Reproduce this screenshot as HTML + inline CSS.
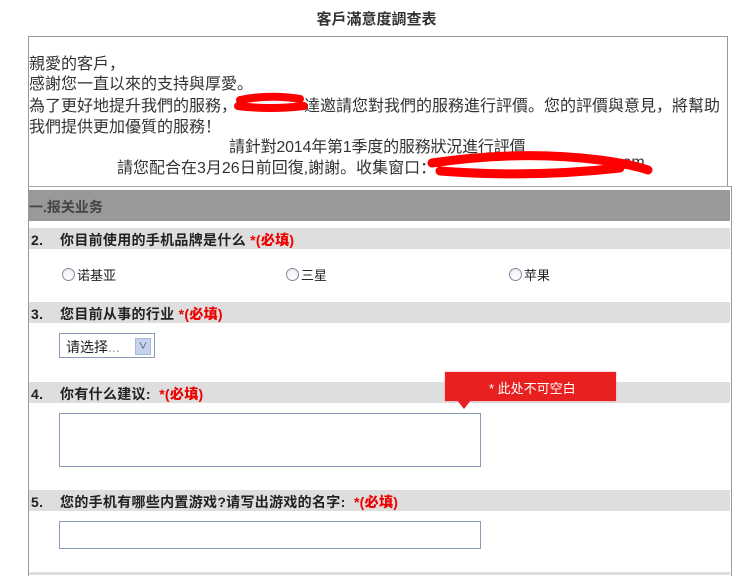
<!DOCTYPE html>
<html><head><meta charset="utf-8"><style>
body{margin:0;width:753px;height:575px;overflow:hidden;background:#fff;font-family:"Liberation Sans","Noto Sans CJK SC",sans-serif;position:relative;color:#222}
.a{position:absolute;white-space:nowrap}
.bar{position:absolute;left:29px;width:701px;background:#dedede;height:21px}
.q{position:absolute;font-size:14px;font-weight:bold;color:#222;letter-spacing:0.3px}
.q b{color:#e00}
.r{position:absolute;width:11px;height:11px;border:1px solid #7a8ba0;border-radius:50%;background:linear-gradient(#eee,#fff)}
.t{font-size:13px}
.p{font-size:16px;color:#333;position:absolute;white-space:nowrap}
</style></head><body>
<div class="a" style="left:0;width:753px;text-align:center;top:8px;font-size:15px;font-weight:bold;color:#333">客戶滿意度調查表</div>
<div class="a" style="left:28px;top:36px;width:698px;height:150px;border:1px solid #999;border-bottom:none"></div>
<div class="p" style="left:29px;top:50px">親愛的客戶，</div>
<div class="p" style="left:29px;top:70px">感謝您一直以來的支持與厚愛。</div>
<div class="p" style="left:29px;top:92px">為了更好地提升我們的服務，</div>
<div class="p" style="left:304px;top:92px">達邀請您對我們的服務進行評價。您的評價與意見，將幫助</div>
<div class="p" style="left:29px;top:113px">我們提供更加優質的服務！</div>
<div class="p" style="left:229px;top:133px;letter-spacing:-0.2px">請針對2014年第1季度的服務狀況進行評價</div>
<div class="p" style="left:117px;top:154px">請您配合在3月26日前回復,謝謝。收集窗口：</div>
<div class="p" style="left:610px;top:154px">.com</div>
<svg class="a" style="left:0;top:0" width="753" height="200"><g stroke="#f00" stroke-linecap="round" fill="none"><path d="M240 100 Q270 94 300 99 M238 106 Q270 110 304 106" stroke-width="8"/><path d="M432 163 Q520 150 600 160 Q630 164 648 170 M440 171 Q530 178 620 168" stroke-width="9"/></g></svg>
<div class="a" style="left:28px;top:186px;width:702px;height:389px;border-left:1px solid #999;border-right:1px solid #999;border-top:1px solid #aaa"></div>
<div class="a" style="left:29px;top:190px;width:701px;height:31px;background:#999"></div>
<div class="a" style="left:29px;top:197px;font-size:14px;font-weight:bold;color:#444">一.报关业务</div>
<div class="bar" style="top:228px"></div>
<div class="q" style="left:31px;top:230px">2.&nbsp;&nbsp;&nbsp;&nbsp;你目前使用的手机品牌是什么 <b>*(必填)</b></div>
<div class="r" style="left:62px;top:268px"></div><div class="a t" style="left:77px;top:265px">诺基亚</div>
<div class="r" style="left:286px;top:268px"></div><div class="a t" style="left:301px;top:265px">三星</div>
<div class="r" style="left:509px;top:268px"></div><div class="a t" style="left:524px;top:265px">苹果</div>
<div class="bar" style="top:302px"></div>
<div class="q" style="left:31px;top:304px">3.&nbsp;&nbsp;&nbsp;&nbsp;您目前从事的行业 <b>*(必填)</b></div>
<div class="a" style="left:59px;top:333px;width:94px;height:23px;border:1px solid #8a9cb8;background:#fff"><span class="a" style="left:6px;top:3px;font-size:14px">请选择<span style="color:#997">...</span></span><div class="a" style="left:75px;top:4px;width:14px;height:15px;background:#c5d3ee;border:1px solid #a8b8d8;color:#335;font-size:9px;text-align:center;line-height:15px">&#8744;</div></div>
<div class="bar" style="top:382px"></div>
<div class="q" style="left:31px;top:384px">4.&nbsp;&nbsp;&nbsp;&nbsp;你有什么建议: &nbsp;<b>*(必填)</b></div>
<div class="a" style="left:445px;top:372px;width:171px;height:29px;background:#e82020;box-shadow:0 0 2px #f99"></div>
<div class="a" style="left:457px;top:400px;width:0;height:0;border-left:7px solid transparent;border-right:7px solid transparent;border-top:9px solid #e82020"></div>
<div class="a" style="left:489px;top:378px;color:#fff;font-size:13px">* 此处不可空白</div>
<div class="a" style="left:59px;top:413px;width:420px;height:52px;border:1px solid #8a9cb8"></div>
<div class="bar" style="top:490px"></div>
<div class="q" style="left:31px;top:492px">5.&nbsp;&nbsp;&nbsp;&nbsp;您的手机有哪些内置游戏?请写出游戏的名字: &nbsp;<b>*(必填)</b></div>
<div class="a" style="left:59px;top:521px;width:420px;height:26px;border:1px solid #8a9cb8"></div>
<div class="a" style="left:29px;top:572px;width:701px;height:3px;background:#ddd"></div>
</body></html>
